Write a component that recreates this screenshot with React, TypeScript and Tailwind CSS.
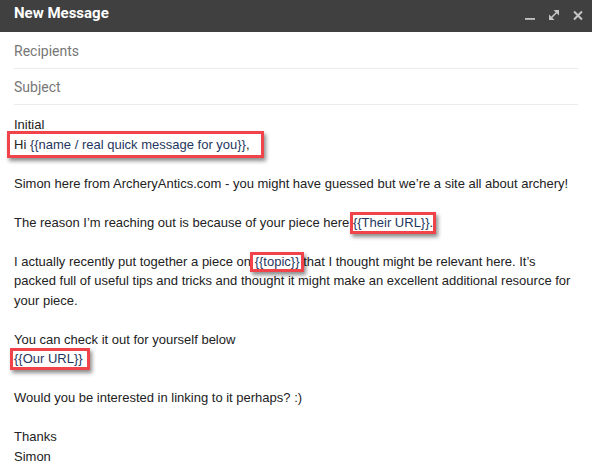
import React from 'react'

const tpl = 'text-[#1f3760]'

function Boxed({
  children,
  box,
}: {
  children: React.ReactNode
  box: string
}) {
  return (
    <span className="relative">
      {children}
      <span
        className={`pointer-events-none absolute border-[3px] border-[#f0434a] shadow-[2px_3px_4px_rgba(0,0,0,0.45)] ${box}`}
      />
    </span>
  )
}

function HeaderIcons() {
  return (
    <div className="ml-auto mt-[4px] flex gap-[12px] pr-2">
      <svg width="12" height="12" viewBox="0 0 12 12">
        <rect x="1" y="9" width="10" height="1.8" fill="#c4c4c4" />
      </svg>
      <svg width="12" height="12" viewBox="0 0 12 12">
        <line x1="2.5" y1="9.5" x2="9.5" y2="2.5" stroke="#c4c4c4" strokeWidth="1.6" />
        <polygon points="5.5,1 11,1 11,6.5" fill="#c4c4c4" />
        <polygon points="1,5.5 1,11 6.5,11" fill="#c4c4c4" />
      </svg>
      <svg width="12" height="12" viewBox="0 0 12 12">
        <path d="M2 2.5 L10 10.5 M10 2.5 L2 10.5" stroke="#c4c4c4" strokeWidth="2" />
      </svg>
    </div>
  )
}

export default function App() {
  return (
    <div className="h-[465px] w-[592px] overflow-hidden bg-white">
      {/* title bar */}
      <div className="flex h-8 items-start bg-[#404040] pl-[14px] pt-[5px]">
        <span className="font-['Roboto',sans-serif] text-[15px] font-bold leading-[17px] text-white">
          New Message
        </span>
        <HeaderIcons />
      </div>

      {/* fields */}
      <div className="mx-[14px] font-['Roboto',sans-serif] text-[14px] text-[#777]">
        <div className="box-border flex h-[37px] items-center border-b border-[#ececec] pt-[2px]">
          Recipients
        </div>
        <div className="box-border flex h-9 items-center border-b border-[#ececec] pt-[2px]">
          Subject
        </div>
      </div>

      {/* body */}
      <div className="px-[14px] pt-[10px] font-['Liberation_Sans',Arial,sans-serif] text-[13px] leading-[19.5px] text-[#222]">
        <div>Initial</div>
        <div>
          <Boxed box="-left-[7px] -right-[14px] -top-[6px] -bottom-[6px]">
            Hi <span className={tpl}>{'{{name / real quick message for you}}'}</span>,
          </Boxed>
        </div>
        <br />
        <div>
          Simon here from ArcheryAntics.com - you might have guessed but we’re a site all about
          archery!
        </div>
        <br />
        <div>
          The reason I’m reaching out is because of your piece here{' '}
          <Boxed box="-left-[3px] -right-[6px] -top-[3px] -bottom-[4px]">
            <span className={tpl}>{'{{Their URL}}'}</span>
          </Boxed>
          .
        </div>
        <br />
        <div>
          I actually recently put together a piece on{' '}
          <Boxed box="-left-[5px] -right-[4px] -top-[2px] -bottom-[3px]">
            <span className={tpl}>{'{{topic}}'}</span>
          </Boxed>{' '}
          that I thought might be relevant here. It’s packed full of useful tips and tricks and
          thought it might make an excellent additional resource for your piece.
        </div>
        <br />
        <div>You can check it out for yourself below</div>
        <div>
          <Boxed box="-left-[4px] -right-[7px] -top-[3px] -bottom-[4px]">
            <span className={tpl}>{'{{Our URL}}'}</span>
          </Boxed>
        </div>
        <br />
        <div>Would you be interested in linking to it perhaps? :)</div>
        <br />
        <div>Thanks</div>
        <div>Simon</div>
      </div>
    </div>
  )
}
